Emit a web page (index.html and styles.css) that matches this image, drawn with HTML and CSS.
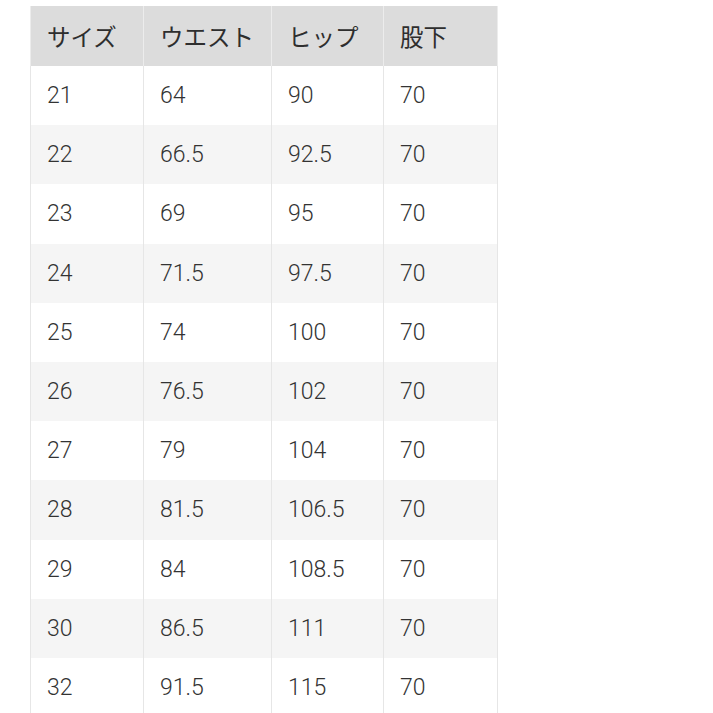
FILE: index.html
```html
<!DOCTYPE html>
<html lang="ja">
<head>
<meta charset="utf-8">
<link rel="stylesheet" href="styles.css">
</head>
<body>
<table class="size-table">
  <colgroup>
    <col class="c1"><col class="c2"><col class="c3"><col class="c4">
  </colgroup>
  <thead>
    <tr><th>サイズ</th><th>ウエスト</th><th>ヒップ</th><th>股下</th></tr>
  </thead>
  <tbody>
    <tr><td>21</td><td>64</td><td>90</td><td>70</td></tr>
    <tr><td>22</td><td>66.5</td><td>92.5</td><td>70</td></tr>
    <tr><td>23</td><td>69</td><td>95</td><td>70</td></tr>
    <tr><td>24</td><td>71.5</td><td>97.5</td><td>70</td></tr>
    <tr><td>25</td><td>74</td><td>100</td><td>70</td></tr>
    <tr><td>26</td><td>76.5</td><td>102</td><td>70</td></tr>
    <tr><td>27</td><td>79</td><td>104</td><td>70</td></tr>
    <tr><td>28</td><td>81.5</td><td>106.5</td><td>70</td></tr>
    <tr><td>29</td><td>84</td><td>108.5</td><td>70</td></tr>
    <tr><td>30</td><td>86.5</td><td>111</td><td>70</td></tr>
    <tr><td>32</td><td>91.5</td><td>115</td><td>70</td></tr>
  </tbody>
</table>
</body>
</html>
```
FILE: styles.css
```css
html, body {
  margin: 0;
  padding: 0;
  background: #ffffff;
}
body {
  padding: 6px 0 0 30px;
}
.size-table {
  border-collapse: collapse;
  table-layout: fixed;
  width: 467px;
  font-family: Roboto, "Noto Sans CJK JP", sans-serif;
  color: #444444;
}
.c1 { width: 113px; }
.c2 { width: 128px; }
.c3 { width: 112px; }
.c4 { width: 114px; }
.size-table th {
  background: #dcdcdc;
  height: 60px;
  padding: 0 0 0 16px;
  text-align: left;
  font-family: "Noto Sans CJK JP", sans-serif;
  font-weight: 400;
  font-size: 23.5px;
  color: #2e2e2e;
  border-left: 1px solid #ececec;
  border-right: 1px solid #ececec;
}
.size-table td {
  height: 59.2px;
  padding: 0 0 0 16px;
  font-size: 23px;
  font-weight: 300;
  color: #333333;
  border-left: 1px solid #e6e6e6;
  border-right: 1px solid #e6e6e6;
}
.size-table tbody tr:nth-child(even) td {
  background: #f5f5f5;
}
.size-table th, .size-table td {
  box-sizing: border-box;
  vertical-align: middle;
}
```
